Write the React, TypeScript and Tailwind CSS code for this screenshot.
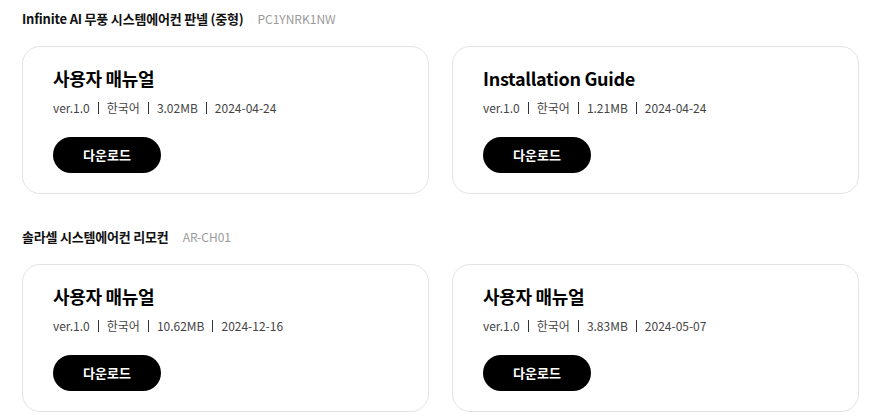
const font = { fontFamily: '"Noto Sans CJK KR", "Noto Sans", sans-serif' }

type Manual = {
  title: string
  version: string
  lang: string
  size: string
  date: string
}

type Product = {
  name: string
  model: string
  manuals: Manual[]
}

const products: Product[] = [
  {
    name: 'Infinite AI 무풍 시스템에어컨 판넬 (중형)',
    model: 'PC1YNRK1NW',
    manuals: [
      { title: '사용자 매뉴얼', version: 'ver.1.0', lang: '한국어', size: '3.02MB', date: '2024-04-24' },
      { title: 'Installation Guide', version: 'ver.1.0', lang: '한국어', size: '1.21MB', date: '2024-04-24' },
    ],
  },
  {
    name: '솔라셀 시스템에어컨 리모컨',
    model: 'AR-CH01',
    manuals: [
      { title: '사용자 매뉴얼', version: 'ver.1.0', lang: '한국어', size: '10.62MB', date: '2024-12-16' },
      { title: '사용자 매뉴얼', version: 'ver.1.0', lang: '한국어', size: '3.83MB', date: '2024-05-07' },
    ],
  },
]

function ManualCard({ manual }: { manual: Manual }) {
  const parts = [manual.version, manual.lang, manual.size, manual.date]
  return (
    <div className="border border-[#e3e3e3] rounded-[18px] bg-white px-[30px] pt-[18px] pb-[20px]">
      <h3 className="text-[18px] leading-[26px] font-bold text-black tracking-[-0.3px]">{manual.title}</h3>
      <div className="mt-[7px] flex items-center text-[12px] leading-[20px] text-[#444]">
        {parts.map((p, i) => (
          <div key={i} className="flex items-center">
            {i > 0 && <span className="mx-[8px] w-px h-[12px] bg-[#333]" />}
            <span>{p}</span>
          </div>
        ))}
      </div>
      <button
        type="button"
        className="mt-[19px] w-[108px] h-[36px] rounded-full bg-black text-white text-[13px] font-bold"
      >
        다운로드
      </button>
    </div>
  )
}

export default function App() {
  return (
    <div className="bg-white w-[872px] h-[420px] overflow-hidden px-[22px] pt-[8px]" style={font}>
      {products.map((product, idx) => (
        <section key={idx} className={idx > 0 ? 'mt-[32px]' : ''}>
          <div className="flex items-center gap-[14px] h-[22px]">
            <span className="text-[13px] font-bold text-[#111] tracking-[-0.2px]">{product.name}</span>
            <span className="text-[12px] text-[#999]">{product.model}</span>
          </div>
          <div className="mt-[16px] grid grid-cols-[407px_407px] gap-[23px]">
            {product.manuals.map((m, i) => (
              <ManualCard key={i} manual={m} />
            ))}
          </div>
        </section>
      ))}
    </div>
  )
}
